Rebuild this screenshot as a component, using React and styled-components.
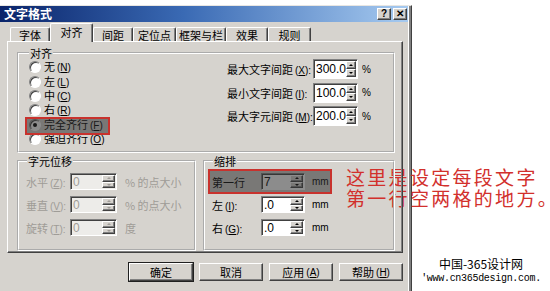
import styled, { createGlobalStyle, css } from 'styled-components';

const GlobalStyle = createGlobalStyle`
  html, body { margin: 0; padding: 0; background: #fff; }
  body {
    font-family: "Noto Sans CJK SC", "Liberation Sans", sans-serif;
    font-size: 12px;
    color: #000;
  }
`;

const FACE = '#d6d3ce';

const raised = css`
  border: 1px solid;
  border-color: #fff #404040 #404040 #fff;
  box-shadow: inset -1px -1px 0 #808080;
`;

const sunken = css`
  border: 1px solid;
  border-color: #808080 #fff #fff #808080;
  box-shadow: inset 1px 1px 0 #404040;
`;

const highlight = css`
  position: relative;
  &::after {
    content: '';
    position: absolute;
    inset: ${(p) => p.$inset || '-4px'};
    background: rgba(45, 45, 45, 0.55);
    border: 2px solid #c8322d;
    pointer-events: none;
  }
`;

const Page = styled.div`
  position: relative;
  width: 550px;
  height: 291px;
  overflow: hidden;
  display: flex;
  align-items: flex-start;
`;

const Dialog = styled.div`
  margin-top: 5px;
  width: 412px;
  height: 286px;
  flex-shrink: 0;
  box-sizing: border-box;
  background: ${FACE};
  border-top: 1px solid #e8e6e2;
  border-right: 1px solid #404040;
  box-shadow: inset -2px 0 0 #808080, inset -3px 0 0 #fff;
  padding-right: 3px;
  display: flex;
  flex-direction: column;
  font-size: 11px;
`;

const TitleBar = styled.div`
  height: 16px;
  display: flex;
  align-items: center;
  padding: 0 1px 0 4px;
  background: linear-gradient(to right, #0a246a, #3a6ab4 45%, #a6caf0);
`;

const Title = styled.span`
  flex: 1;
  color: #fff;
  font-weight: bold;
  font-size: 12px;
  line-height: 16px;
`;

const CapButton = styled.span`
  width: 14px;
  height: 12px;
  box-sizing: border-box;
  ${raised};
  background: ${FACE};
  margin-left: ${(p) => p.$gap || 0}px;
  display: flex;
  align-items: center;
  justify-content: center;
  font-family: "Liberation Sans", sans-serif;
  font-weight: bold;
  font-size: 10px;
  line-height: 1;
`;

const Body = styled.div`
  padding: 1px 5px 0 7px;
  display: flex;
  flex-direction: column;
`;

const TabRow = styled.div`
  display: flex;
  align-items: flex-end;
  height: 19px;
  padding-left: 3px;
  margin-bottom: -1px;
`;

const Tab = styled.div`
  position: relative;
  z-index: ${(p) => (p.$active ? 2 : 0)};
  width: ${(p) => p.$w}px;
  height: ${(p) => (p.$active ? 19 : 15)}px;
  box-sizing: border-box;
  background: ${FACE};
  border: 1px solid #fff;
  border-right-color: #404040;
  border-bottom: none;
  border-radius: 2px 2px 0 0;
  box-shadow: inset -1px 0 0 #808080;
  display: flex;
  align-items: ${(p) => (p.$active ? 'flex-start' : 'center')};
  justify-content: center;
  padding-top: ${(p) => (p.$active ? 1 : 0)}px;
  line-height: 14px;
`;

const Panel = styled.div`
  position: relative;
  z-index: 1;
  height: 212px;
  box-sizing: border-box;
  ${raised};
  padding: 5px 7px 0 9px;
  display: flex;
  flex-direction: column;
`;

const Group = styled.fieldset`
  margin: 0;
  min-width: 0;
  height: ${(p) => p.$h}px;
  box-sizing: border-box;
  border: 2px groove #fff;
  padding: ${(p) => p.$pad || '0 7px'};
`;

const Legend = styled.legend`
  padding: 0 1px;
  margin-left: 1px;
  line-height: 12px;
`;

const AlignGrid = styled.div`
  display: grid;
  grid-template-columns: 199px 1fr;
`;

const RadioList = styled.div`
  display: flex;
  flex-direction: column;
  padding-top: 1px;
`;

const RadioRow = styled.div`
  height: 14.4px;
  width: fit-content;
  display: flex;
  align-items: center;
  gap: 3px;
  padding-left: 1px;
  padding-right: 4px;
  line-height: 14px;
  ${(p) => p.$hl && highlight};
`;

const RadioDot = styled.span`
  width: 12px;
  height: 12px;
  box-sizing: border-box;
  border-radius: 50%;
  background: #fff;
  border: 1px solid;
  border-color: #808080 #fff #fff #808080;
  box-shadow: inset 1px 1px 0 #404040;
  display: flex;
  align-items: center;
  justify-content: center;
  &::after {
    content: '';
    width: 4px;
    height: 4px;
    border-radius: 50%;
    background: ${(p) => (p.$on ? '#000' : 'transparent')};
  }
`;

const Hot = styled.span`
  font-family: "Liberation Sans", sans-serif;
  font-size: 10px;
  margin-left: 2px;
`;

const Key = styled.span`
  text-decoration: underline;
`;

const SpaceList = styled.div`
  display: flex;
  flex-direction: column;
  gap: 3.5px;
`;

const FieldRow = styled.div`
  height: ${(p) => p.$h || 20}px;
  width: fit-content;
  display: flex;
  align-items: center;
  color: ${(p) => (p.$off ? '#9f9c97' : '#000')};
  ${(p) => p.$hl && highlight};
`;

const Label = styled.span`
  width: ${(p) => p.$w}px;
  flex-shrink: 0;
  white-space: nowrap;
`;

const Field = styled.span`
  width: ${(p) => p.$w}px;
  height: 100%;
  box-sizing: border-box;
  ${sunken};
  background: ${(p) => (p.$off ? '#edece9' : '#fff')};
  display: flex;
  padding: 1px 1px 1px 2px;
`;

const FieldText = styled.span`
  flex: 1;
  font-family: "Liberation Sans", sans-serif;
  font-size: 12px;
  display: flex;
  align-items: center;
  color: ${(p) => (p.$off ? '#9f9c97' : '#000')};
`;

const Spin = styled.span`
  width: 13px;
  display: flex;
  flex-direction: column;
`;

const SpinBtn = styled.span`
  flex: 1;
  box-sizing: border-box;
  ${raised};
  background: ${FACE};
  display: flex;
  align-items: center;
  justify-content: center;
  &::before {
    content: '';
    border-left: 2px solid transparent;
    border-right: 2px solid transparent;
    ${(p) => (p.$down ? 'border-top' : 'border-bottom')}: 2px solid ${(p) => (p.$off ? '#9f9c97' : '#000')};
  }
`;

const Unit = styled.span`
  margin-left: ${(p) => p.$gap || 4}px;
  font-size: ${(p) => p.$size || 11}px;
  font-family: ${(p) => (p.$latin ? '"Liberation Sans", sans-serif' : 'inherit')};
  white-space: nowrap;
`;

const LowerRow = styled.div`
  margin-top: 2px;
  display: grid;
  grid-template-columns: 179px 192px;
  column-gap: 7px;
`;

const FieldList = styled.div`
  display: flex;
  flex-direction: column;
  gap: 6px;
  padding-top: 6px;
`;

const ButtonRow = styled.div`
  margin-top: 10px;
  display: flex;
  justify-content: flex-end;
  gap: 6px;
`;

const Button = styled.div`
  width: 64px;
  height: 18px;
  box-sizing: border-box;
  ${raised};
  ${(p) =>
    p.$default &&
    css`
      outline: 1px solid #202020;
    `}
  display: flex;
  align-items: center;
  justify-content: center;
`;

const Side = styled.div`
  flex: 1;
  display: flex;
  flex-direction: column;
  align-items: center;
  padding-top: 258px;
`;

const MarkTitle = styled.div`
  font-size: 12px;
  line-height: 12px;
  height: 12px;
`;

const MarkUrl = styled.div`
  margin-top: 3px;
  font-family: "Liberation Mono", monospace;
  font-size: 10px;
  letter-spacing: -0.3px;
  line-height: 12px;
  height: 12px;
`;

const Note = styled.div`
  position: absolute;
  left: 346px;
  top: 166px;
  color: #d2302c;
  font-size: 19px;
  line-height: 21px;
  letter-spacing: 2.3px;
  white-space: nowrap;
`;

const tabs = [
  ['字体', 40],
  ['对齐', 43, true],
  ['间距', 40],
  ['定位点', 43],
  ['框架与栏', 50],
  ['效果', 42],
  ['规则', 43],
];

const radios = [
  ['无', 'N'],
  ['左', 'L'],
  ['中', 'C'],
  ['右', 'R'],
  ['完全齐行', 'F', true],
  ['强迫齐行', 'O'],
];

const spacing = [
  ['最大文字间距', 'X', '300.0'],
  ['最小文字间距', 'I', '100.0'],
  ['最大字元间距', 'M', '200.0'],
];

const shifts = [
  ['水平', 'Z', '% 的点大小'],
  ['垂直', 'V', '% 的点大小'],
  ['旋转', 'T', '度'],
];

const Shortcut = ({ k, colon }) => (
  <Hot>
    (<Key>{k}</Key>){colon ? ':' : ''}
  </Hot>
);

const Spinner = ({ off }) => (
  <Spin>
    <SpinBtn $off={off} />
    <SpinBtn $off={off} $down />
  </Spin>
);

export default function App() {
  return (
    <>
      <GlobalStyle />
      <Page>
        <Dialog>
          <TitleBar>
            <Title>文字格式</Title>
            <CapButton>?</CapButton>
            <CapButton $gap={2}>✕</CapButton>
          </TitleBar>
          <Body>
            <TabRow>
              {tabs.map(([t, w, a]) => (
                <Tab key={t} $w={w} $active={a}>
                  {t}
                </Tab>
              ))}
            </TabRow>
            <Panel>
              <Group $h={106} $pad="0 7px 0 9px">
                <Legend>对齐</Legend>
                <AlignGrid>
                  <RadioList>
                    {radios.map(([t, k, on]) => (
                      <RadioRow key={t} $hl={on} $inset="-1px -3px -3px -3px">
                        <RadioDot $on={on} />
                        <span>
                          {t}
                          <Shortcut k={k} />
                        </span>
                      </RadioRow>
                    ))}
                  </RadioList>
                  <SpaceList>
                    {spacing.map(([t, k, v]) => (
                      <FieldRow key={t}>
                        <Label $w={86}>
                          {t}
                          <Shortcut k={k} colon />
                        </Label>
                        <Field $w={45}>
                          <FieldText>{v}</FieldText>
                          <Spinner />
                        </Field>
                        <Unit $gap={4} $size={10} $latin>
                          %
                        </Unit>
                      </FieldRow>
                    ))}
                  </SpaceList>
                </AlignGrid>
              </Group>
              <LowerRow>
                <Group $h={96}>
                  <Legend>字元位移</Legend>
                  <FieldList>
                    {shifts.map(([t, k, u]) => (
                      <FieldRow key={t} $h={17} $off>
                        <Label $w={44}>
                          {t}
                          <Shortcut k={k} colon />
                        </Label>
                        <Field $w={47} $off>
                          <FieldText $off>0</FieldText>
                          <Spinner off />
                        </Field>
                        <Unit $gap={8}>{u}</Unit>
                      </FieldRow>
                    ))}
                  </FieldList>
                </Group>
                <Group $h={96}>
                  <Legend>缩排</Legend>
                  <FieldList>
                    <FieldRow $h={17} $hl $inset="-4px -3px -4px -4px">
                      <Label $w={49}>第一行</Label>
                      <Field $w={44}>
                        <FieldText>7</FieldText>
                        <Spinner />
                      </Field>
                      <Unit $gap={7} $size={10} $latin>
                        mm
                      </Unit>
                    </FieldRow>
                    {[
                      ['左', 'I'],
                      ['右', 'G'],
                    ].map(([t, k]) => (
                      <FieldRow key={t} $h={17}>
                        <Label $w={49}>
                          {t}
                          <Shortcut k={k} colon />
                        </Label>
                        <Field $w={44}>
                          <FieldText>.0</FieldText>
                          <Spinner />
                        </Field>
                        <Unit $gap={7} $size={10} $latin>
                          mm
                        </Unit>
                      </FieldRow>
                    ))}
                  </FieldList>
                </Group>
              </LowerRow>
            </Panel>
            <ButtonRow>
              <Button $default>确定</Button>
              <Button>取消</Button>
              <Button>
                应用
                <Shortcut k="A" />
              </Button>
              <Button>
                帮助
                <Shortcut k="H" />
              </Button>
            </ButtonRow>
          </Body>
        </Dialog>
        <Side>
          <MarkTitle>中国-365设计网</MarkTitle>
          <MarkUrl>'www.cn365design.com.</MarkUrl>
        </Side>
        <Note>
          这里是设定每段文字
          <br />
          第一行空两格的地方。
        </Note>
      </Page>
    </>
  );
}
